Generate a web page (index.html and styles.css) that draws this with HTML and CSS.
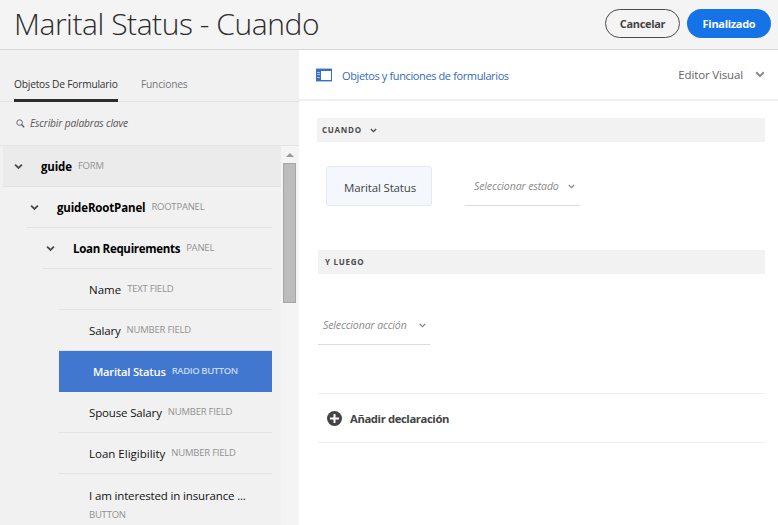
FILE: index.html
```html
<!DOCTYPE html>
<html lang="es">
<head>
<meta charset="utf-8">
<title>Marital Status - Cuando</title>
<link rel="stylesheet" href="styles.css">
</head>
<body>
<svg class="defs" width="0" height="0"><symbol id="chev" viewBox="0 0 10 7"><path d="M1.2 1.3 5 5.1 8.8 1.3" fill="none" stroke="currentColor" stroke-width="2"/></symbol></svg>
<header class="top">
  <h1><span class="t-title">Marital Status - Cuando</span></h1>
  <button class="btn cancel"><span>Cancelar</span></button>
  <button class="btn done"><span>Finalizado</span></button>
</header>
<div class="body">
  <aside class="side">
    <nav class="tabs">
      <a class="tab active"><span class="t-tab1">Objetos De Formulario</span></a>
      <a class="tab"><span class="t-tab2">Funciones</span></a>
    </nav>
    <div class="search">
      <svg width="9" height="9" viewBox="0 0 9 9"><circle cx="3.6" cy="3.6" r="2.8" fill="none" stroke="#666"/><path d="M5.7 5.7 8.2 8.2" stroke="#555" stroke-width="1.3"/></svg>
      <span class="t-search">Escribir palabras clave</span>
    </div>
    <div class="treewrap">
      <div class="tree">
        <div class="row root"><svg class="chev"><use href="#chev"/></svg><b class="n1">guide</b><small>FORM</small></div>
        <div class="row l1"><svg class="chev"><use href="#chev"/></svg><b class="n2">guideRootPanel</b><small>ROOTPANEL</small></div>
        <div class="row l2"><svg class="chev"><use href="#chev"/></svg><b class="n3">Loan Requirements</b><small>PANEL</small></div>
        <div class="row leaf"><span class="n4">Name</span><small>TEXT FIELD</small></div>
        <div class="row leaf"><span class="n5">Salary</span><small>NUMBER FIELD</small></div>
        <div class="row leaf selected"><span class="n6">Marital Status</span><small>RADIO BUTTON</small></div>
        <div class="row leaf"><span class="n7">Spouse Salary</span><small>NUMBER FIELD</small></div>
        <div class="row leaf"><span class="n8">Loan Eligibility</span><small>NUMBER FIELD</small></div>
        <div class="row leaf last"><span class="n9">I am interested in insurance ...</span><small>BUTTON</small></div>
      </div>
      <div class="scroll"><i class="arrow"></i><i class="thumb"></i></div>
    </div>
  </aside>
  <main class="main">
    <div class="bar">
      <svg width="16" height="14" viewBox="0 0 16 14"><path fill="#3a6fc4" d="M0 0h16v14H0z"/><path fill="#a9c2e8" d="M0 0h16v1H0zM1 4h3v1H1zM1 6h3v1H1zM1 9h3v1H1zM0 13h16v1H0z"/><path fill="#fff" d="M5 3h10v9H5z"/></svg>
      <span class="t-link">Objetos y funciones de formularios</span>
      <span class="mode"><span class="t-mode">Editor Visual</span><svg class="chev"><use href="#chev"/></svg></span>
    </div>
    <div class="section when"><span class="t-when">CUANDO</span><svg class="chev"><use href="#chev"/></svg></div>
    <div class="cond">
      <div class="chip"><span class="t-chip">Marital Status</span></div>
      <div class="select state"><em class="t-state">Seleccionar estado</em><svg class="chev"><use href="#chev"/></svg></div>
    </div>
    <div class="section then"><span class="t-then">Y LUEGO</span></div>
    <div class="select action"><em class="t-action">Seleccionar acción</em><svg class="chev"><use href="#chev"/></svg></div>
    <div class="add">
      <svg width="15" height="15" viewBox="0 0 15 15"><circle cx="7.5" cy="7.5" r="7.5" fill="#444"/><path d="M7.5 3v9M3 7.5h9" stroke="#fff" stroke-width="2"/></svg>
      <b class="t-add">Añadir declaración</b>
    </div>
  </main>
</div>
</body>
</html>
```
FILE: styles.css
```css
* { box-sizing: border-box; }
body { margin: 0; width: 778px; height: 525px; overflow: hidden; background: #fff; font: 11.5px/16px "Open Sans", "Noto Sans", sans-serif; letter-spacing: -0.15px; color: #444; }
.defs { position: absolute; }
span, b, small, em { white-space: nowrap; }
svg { flex: none; display: block; }
.chev { width: 9px; height: 7px; color: #4b4b4b; }
.top { height: 50px; background: #f4f4f4; border-bottom: 1px solid #d5d5d5; display: flex; align-items: center; padding: 0 7px 3px 14px; }
h1 { flex: 1; margin: 0; font-size: 30px; line-height: 46px; font-weight: 300; letter-spacing: -0.45px; color: #2c2c2c; padding-top: 2px; }
.btn { height: 29px; border-radius: 15px; padding: 2px 0 0; font: 700 11px/16px "Open Sans", sans-serif; letter-spacing: -0.3px; }
.cancel { width: 75px; border: 1px solid #4b4b4b; background: transparent; color: #444; }
.done { width: 84px; margin-left: 7px; border: 0; background: #1473e6; color: #fff; }
.body { display: flex; height: 475px; }
.side { width: 299px; background: #f1f1f1; }
.tabs { height: 52px; border-bottom: 1px solid #e4e4e4; display: flex; padding-left: 14px; gap: 23px; font-size: 10.2px; letter-spacing: -0.2px; }
.tab { height: 52px; padding-top: 26px; color: #777; }
.tab.active { width: 104px; border-bottom: 3px solid #2c2c2c; color: #333; }
.search { height: 44px; border-bottom: 1px solid #e3e3e3; display: flex; align-items: center; padding: 0 0 1px 16px; gap: 5px; font-size: 10.2px; font-style: italic; color: #555; }
.treewrap { display: flex; height: 379px; overflow: hidden; }
.tree { width: 281px; padding-left: 3px; }
.row { height: 41px; border-bottom: 1px solid #e3e3e3; display: flex; align-items: center; margin-right: 9px; padding-top: 2px; color: #111; }
.row b { color: #000; }
.row small { font-size: 9.5px; letter-spacing: -0.22px; color: #929292; margin: -3px 0 0 6px; }
.n3 { letter-spacing: -0.3px; }
.n4, .n8 { letter-spacing: 0; }
.root { margin-right: 0; background: #ebebeb; padding-left: 11px; }
.row .chev { margin: -2px 18px 0 0; }
.l1 { margin-left: 24px; padding-left: 3px; }
.l2 { margin-left: 40px; padding-left: 3px; }
.leaf { margin-left: 56px; padding-left: 30px; }
.selected { background: #4177cf; border-color: #4177cf; color: #fff; padding-left: 34px; font-weight: 600; }
.selected .n6 { font-size: 11.2px; letter-spacing: -0.22px; }
.selected small { color: #c4d6f5; letter-spacing: -0.42px; }
.last { height: 60px; flex-direction: column; align-items: flex-start; padding-top: 14px; border: 0; }
.last small { margin: 3px 0 0; }
.scroll { width: 18px; background: #f4f4f4; padding: 7px 3px 0 2px; }
.arrow { display: block; width: 0; margin: 0 auto; border: 4px solid transparent; border-top: 0; border-bottom-color: #999; }
.thumb { display: block; height: 140px; margin-top: 6px; background: #bcbcbc; border: 1px solid #a6a6a6; }
.main { width: 479px; }
.bar { height: 51px; border-bottom: 2px solid #f0f0f0; display: flex; align-items: center; padding: 1px 13px 0 17px; gap: 10px; color: #326ac0; }
.bar .t-link { padding-top: 2px; font-size: 11px; letter-spacing: -0.38px; }
.mode { margin-left: auto; display: flex; align-items: center; gap: 12px; color: #666; }
.mode .chev { width: 10px; color: #888; margin-top: -2px; }
.section { height: 24px; background: #f2f2f2; display: flex; align-items: center; font-size: 8px; letter-spacing: 0.72px; font-weight: 700; color: #4b4b4b; margin-right: 13px; }
.section .chev { width: 7px; height: 5px; margin-left: 8px; }
.when { margin: 17px 13px 0 18px; padding-left: 5px; }
.cond { display: flex; margin: 24px 0 0 27px; height: 40px; gap: 33px; }
.chip { width: 106px; height: 40px; border: 1px solid #e4eaf1; border-radius: 3px; background: #f4f8fd; display: flex; align-items: center; padding: 3px 0 0 17px; }
.select { height: 40px; border-bottom: 1px solid #dcdcdc; display: flex; align-items: center; justify-content: space-between; color: #8a8a8a; font-size: 10.5px; letter-spacing: -0.1px; }
.select .chev { width: 7px; height: 5px; color: #8a8a8a; }
.state { width: 115px; padding: 1px 5px 0 9px; }
.then { margin: 44px 13px 0 19px; padding-left: 7px; }
.action { width: 112px; margin: 31px 0 0 19px; padding: 1px 4px 0 5px; }
.add { height: 50px; margin: 48px 13px 0 19px; border: solid #efefef; border-width: 1px 0; display: flex; align-items: center; gap: 8px; padding-left: 9px; }
.t-add { padding-top: 2px; font-size: 11.3px; letter-spacing: -0.4px; }
```
